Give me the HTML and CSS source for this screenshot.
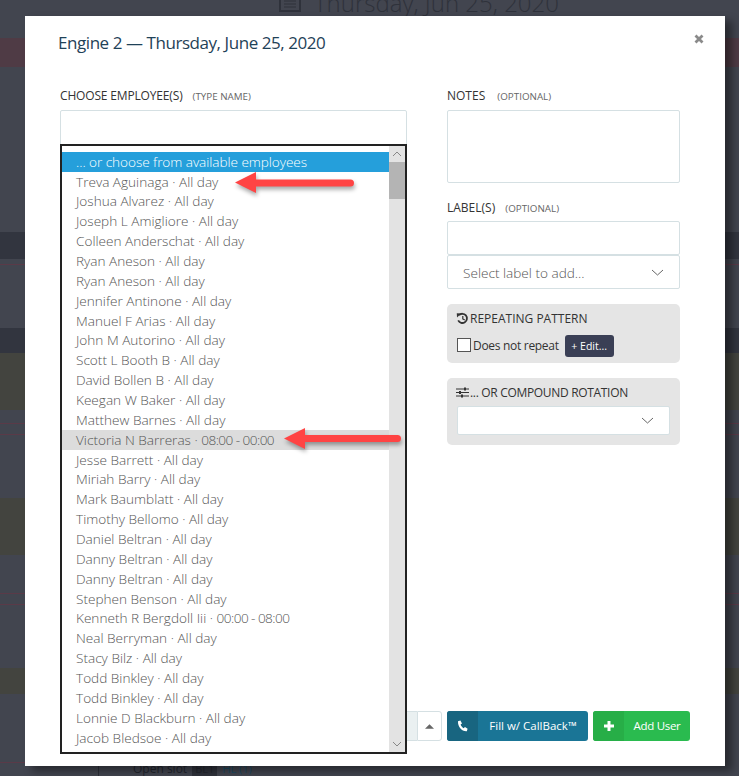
FILE: index.html
```html
<!DOCTYPE html>
<html lang="en">
<head>
  <meta charset="UTF-8" />
  <title>Engine 2 - Schedule</title>
  <link rel="stylesheet" href="styles.css">
</head>
<body>

  <!-- Schedule page behind the modal -->
  <div class="page">
    <div class="page-date">
      <svg class="cal-icon" width="22" height="20" viewBox="0 0 22 20"><rect x="1" y="1" width="20" height="18" fill="none" stroke="#2f323b" stroke-width="2"/><rect x="1" y="1" width="20" height="5" fill="#2f323b"/><path d="M5 9h12M5 12h12M5 15h12" stroke="#2f323b"/></svg>
      <span>Thursday, Jun 25, 2020</span>
    </div>
    <div class="band band-red"></div>
    <div class="band band-dark-1"></div>
    <div class="band band-line-1"></div>
    <div class="band band-dark-2"></div>
    <div class="band band-olive-1"></div>
    <div class="band band-line-2"></div>
    <div class="band band-line-3"></div>
    <div class="band band-olive-2"></div>
    <div class="band band-line-2 gap-far"></div>
    <div class="band band-line-3"></div>
    <div class="band band-olive-3"></div>
    <div class="band band-line-4"></div>
    <div class="page-foot">
      <span class="foot-box"></span>
      <span class="foot-slot">Open slot</span>
      <span class="foot-badge">BL1</span>
      <span class="foot-link">HL (1)</span>
    </div>
  </div>

  <!-- Modal -->
  <div class="modal">
    <div class="modal-head">
      <h1>Engine 2 — Thursday, June 25, 2020</h1>
      <svg class="close" width="10" height="10" viewBox="0 0 10 10"><path d="M1.5 1.5l7 7M8.5 1.5l-7 7" stroke="#8a8a8a" stroke-width="2.8"/></svg>
    </div>

    <div class="modal-body">
      <div class="col-left">
        <label class="field-label label-tight">CHOOSE EMPLOYEE(S) <small>(TYPE NAME)</small></label>
        <div class="input input-names"></div>
      </div>

      <div class="col-right">
        <label class="field-label">NOTES <small class="small-wide">(OPTIONAL)</small></label>
        <div class="input input-notes"></div>

        <label class="field-label label-gap">LABEL(S) <small>(OPTIONAL)</small></label>
        <div class="input input-label"></div>
        <div class="input select-label">
          <span>Select label to add...</span>
          <svg width="13" height="7" viewBox="0 0 13 7"><path d="M1 1l5.5 5L12 1" fill="none" stroke="#666"/></svg>
        </div>

        <div class="panel panel-repeat">
          <div class="panel-title">
            <svg width="13" height="13" viewBox="0 0 13 13"><path d="M3 3.2A4.6 4.6 0 1 1 2.2 8.4" fill="none" stroke="#333" stroke-width="1.8"/><path d="M0.8 1.2l4.4 0.2L1 5.4z" fill="#333"/><path d="M6.8 4v3l2 1" fill="none" stroke="#333" stroke-width="1.2"/></svg>
            <span>REPEATING PATTERN</span>
          </div>
          <div class="repeat-row">
            <span class="checkbox"></span>
            <span class="repeat-text">Does not repeat</span>
            <span class="edit-btn">+ Edit...</span>
          </div>
        </div>

        <div class="panel panel-rotation">
          <div class="panel-title">
            <svg width="13" height="11" viewBox="0 0 13 11"><path d="M0 2h13M0 5.5h13M0 9h13" stroke="#333"/><path d="M8 0.5h2v3H8zM3 4h2v3H3zM5 7.5h2v3H5z" fill="#333"/></svg>
            <span class="rotation-text">... OR COMPOUND ROTATION</span>
          </div>
          <div class="input select-rotation">
            <svg width="13" height="7" viewBox="0 0 13 7"><path d="M1 1l5.5 5L12 1" fill="none" stroke="#666"/></svg>
          </div>
        </div>
      </div>
    </div>

    <div class="modal-foot">
      <div class="spinner">
        <div class="spinner-field"></div>
        <div class="spinner-btn"><svg width="9" height="5" viewBox="0 0 10 5"><path d="M0 5L5 0l5 5z" fill="#666"/></svg></div>
      </div>
      <div class="btn btn-callback">
        <span class="btn-icon"><svg width="11" height="12" viewBox="0 0 11 12"><path d="M1 1.2L3.4 0.4 5 3.4 3.6 4.6C4.2 6.2 5.2 7.4 6.6 8.2L8 6.9 10.6 8.8 9.8 11.2C5 11.6 0.6 6.8 1 1.2z" fill="#fff"/></svg></span>
        <span class="btn-text">Fill w/ CallBack™</span>
      </div>
      <div class="btn btn-add">
        <span class="btn-icon"><svg width="10" height="10" viewBox="0 0 10 10"><path d="M5 0v10M0 5h10" stroke="#fff" stroke-width="3"/></svg></span>
        <span class="btn-text">Add User</span>
      </div>
    </div>

    <!-- Employee dropdown, open over the input -->
    <div class="listbox">
      <ul class="list">
        <li class="selected">... or choose from available employees</li>
        <li>Treva Aguinaga · All day</li>
        <li>Joshua Alvarez · All day</li>
        <li>Joseph L Amigliore · All day</li>
        <li>Colleen Anderschat · All day</li>
        <li>Ryan Aneson · All day</li>
        <li>Ryan Aneson · All day</li>
        <li>Jennifer Antinone · All day</li>
        <li>Manuel F Arias · All day</li>
        <li>John M Autorino · All day</li>
        <li>Scott L Booth B · All day</li>
        <li>David Bollen B · All day</li>
        <li>Keegan W Baker · All day</li>
        <li>Matthew Barnes · All day</li>
        <li class="hover">Victoria N Barreras · <span class="time">08:00 - 00:00</span></li>
        <li>Jesse Barrett · All day</li>
        <li>Miriah Barry · All day</li>
        <li>Mark Baumblatt · All day</li>
        <li>Timothy Bellomo · All day</li>
        <li>Daniel Beltran · All day</li>
        <li>Danny Beltran · All day</li>
        <li>Danny Beltran · All day</li>
        <li>Stephen Benson · All day</li>
        <li>Kenneth R Bergdoll Iii · <span class="time">00:00 - 08:00</span></li>
        <li>Neal Berryman · All day</li>
        <li>Stacy Bilz · All day</li>
        <li>Todd Binkley · All day</li>
        <li>Todd Binkley · All day</li>
        <li>Lonnie D Blackburn · All day</li>
        <li>Jacob Bledsoe · All day</li>
        <li>Joshua Blevins · All day</li>
      </ul>
      <div class="scrollbar">
        <div class="scroll-arrow"><svg width="10" height="6" viewBox="0 0 10 6"><path d="M1 5l4-4 4 4" fill="none" stroke="#888"/></svg></div>
        <div class="scroll-thumb"></div>
        <div class="scroll-track"></div>
        <div class="scroll-arrow"><svg width="10" height="6" viewBox="0 0 10 6"><path d="M1 1l4 4 4-4" fill="none" stroke="#888"/></svg></div>
      </div>
    </div>
  </div>

  <!-- Red annotation arrows -->
  <svg class="arrow arrow-one" width="126" height="26" viewBox="0 0 126 26"><path d="M2 11.5L23 1v7.5h94.5a3.5 3.5 0 0 1 0 7H23V22z" fill="#ff4444"/></svg>
  <svg class="arrow arrow-two" width="122" height="26" viewBox="0 0 122 26"><path d="M2 11.5L23 1v7h92.5a3.5 3.5 0 0 1 0 7H23V22z" fill="#ff4444"/></svg>

</body>
</html>
```

FILE: styles.css
```css
/* Global Styles */
* {
  box-sizing: border-box;
}
html, body {
  margin: 0;
  padding: 0;
  height: 776px;
  overflow: hidden;
}
body {
  position: relative;
  width: 739px;
  background: #42454f;
  font-family: 'Open Sans', sans-serif;
}

/* Page behind the modal */
.page {
  height: 776px;
  overflow: hidden;
}
.page-date {
  height: 38px;
  display: flex;
  align-items: flex-start;
  gap: 13px;
  padding: 0 0 0 279px;
  margin-top: -11px;
  color: #2f323b;
  font-size: 24px;
  font-weight: 300;
  line-height: 28px;
}
.cal-icon {
  margin-top: 3px;
}
.band { height: 1px; }
.band-red { height: 29px; margin-top: 11px; background: #4f3b45; }
.band-dark-1 { height: 27px; margin-top: 165px; background: #32353f; }
.band-line-1 { margin-top: 5px; background: #5a3a48; }
.band-dark-2 { height: 25px; margin-top: 63px; background: #32353f; }
.band-olive-1 { height: 57px; background: #43443f; }
.band-line-2 { margin-top: 13px; background: #5a3a48; }
.band-line-3 { margin-top: 10px; background: #5a3a48; }
.band-olive-2 { height: 57px; margin-top: 63px; background: #43443f; }
.gap-far { margin-top: 38px; }
.band-olive-3 { height: 26px; margin-top: 63px; background: #43443f; }
.band-line-4 { width: 99px; margin-top: 68px; background: #5a3a48; }
.page-foot {
  display: flex;
  align-items: center;
  gap: 5px;
  margin-top: -2px;
  height: 16px;
  font-size: 12px;
  line-height: 16px;
  color: #23262e;
}
.foot-box {
  width: 99px;
  height: 14px;
  margin-top: 1px;
  border-right: 1px solid #2c2f38;
  border-bottom: 1px solid #2c2f38;
}
.foot-slot {
  margin-left: 29px;
}
.foot-badge {
  padding: 0 3px;
  background: #2f323b;
  font-size: 11px;
}
.foot-link {
  color: #1c4a63;
  font-size: 11px;
}

/* Modal */
.modal {
  position: absolute;
  top: 16px;
  left: 25px;
  width: 700px;
  height: 750px;
  display: flex;
  flex-direction: column;
  background: #fff;
  box-shadow: 7px 5px 8px rgba(0, 0, 0, 0.4);
  padding: 0 35px;
}
.modal-head {
  height: 64px;
  display: flex;
  justify-content: space-between;
  align-items: flex-start;
  padding-top: 15px;
  margin: 0 -6px 0 -2px;
}
.modal-head h1 {
  margin: 0;
  font-size: 17px;
  font-weight: 400;
  letter-spacing: -0.44px;
  line-height: 24px;
  color: #1f4258;
}
.close {
  margin-top: 3px;
  margin-right: -8px;
}
.modal-body {
  flex: 1;
  display: flex;
  gap: 40px;
}
.col-left {
  width: 347px;
}
.col-right {
  width: 233px;
}
.field-label {
  display: block;
  height: 30px;
  padding-top: 8px;
  font-size: 12px;
  line-height: 16px;
  color: #333;
}
.field-label small {
  margin-left: 7px;
  font-size: 9.8px;
  letter-spacing: 0;
  color: #666;
}
.field-label .small-wide {
  margin-left: 9px;
}
.label-tight {
  letter-spacing: -0.16px;
}
.label-gap {
  height: 29px;
  margin-top: 9px;
  padding-top: 8px;
}
.input {
  background: #fff;
  border: 1px solid #d5e0e3;
  border-radius: 2px;
}
.input-names { height: 66px; }
.input-notes { height: 73px; }
.input-label { height: 34px; }
.select-label {
  height: 34px;
  display: flex;
  justify-content: space-between;
  align-items: center;
  padding: 0 15px;
  font-size: 13.6px;
  font-weight: 300;
  color: #555;
}

/* Grey panels */
.panel {
  background: #e5e5e5;
  border-radius: 5px;
  padding: 7px 10px 0;
  font-size: 12px;
  color: #333;
}
.panel-repeat {
  height: 59px;
  margin-top: 15px;
}
.panel-rotation {
  height: 67px;
  margin-top: 15px;
}
.panel-title {
  display: flex;
  align-items: center;
  gap: 1px;
  height: 14px;
  margin-left: -1px;
}
.rotation-text {
  letter-spacing: -0.32px;
}
.repeat-row {
  display: flex;
  align-items: center;
  gap: 2px;
  margin-top: 10px;
}
.checkbox {
  width: 14px;
  height: 14px;
  margin-top: -3px;
  background: #fff;
  border: 1px solid #555;
}
.repeat-text {
  margin-top: -2px;
  letter-spacing: -0.3px;
}
.edit-btn {
  margin-left: 4px;
  padding: 0 6px;
  height: 22px;
  width: 49px;
  text-align: center;
  line-height: 22px;
  background: #3a3f55;
  border-radius: 3px;
  color: #fff;
  font-size: 10.5px;
}
.select-rotation {
  height: 29px;
  margin-top: 7px;
  display: flex;
  justify-content: flex-end;
  align-items: center;
  padding-right: 15px;
}

/* Footer buttons */
.modal-foot {
  height: 55px;
  display: flex;
  justify-content: flex-end;
  gap: 5px;
}
.spinner {
  height: 30px;
  display: flex;
}
.spinner-field {
  width: 30px;
  background: #eaf0f1;
  border: 1px solid #d5e0e3;
  border-right: 0;
}
.spinner-btn {
  width: 25px;
  display: flex;
  align-items: center;
  justify-content: center;
  border: 1px solid #d5e0e3;
  border-radius: 0 3px 3px 0;
}
.btn {
  height: 30px;
  display: flex;
  border-radius: 3px;
  overflow: hidden;
  color: #fff;
  font-size: 11.5px;
  line-height: 30px;
}
.btn-icon {
  width: 31px;
  display: flex;
  align-items: center;
  justify-content: center;
}
.btn-text {
  flex: 1;
  text-align: center;
}
.btn-callback { width: 141px; background: #1a7596; }
.btn-callback .btn-icon { background: #186580; }
.btn-add { width: 97px; background: #2abb4f; letter-spacing: -0.3px; }
.btn-add .btn-icon { background: #27ae47; }

/* Dropdown list */
.listbox {
  position: absolute;
  top: 128px;
  left: 35px;
  width: 347px;
  height: 610px;
  display: flex;
  background: #fff;
  border: 2px solid #222;
  overflow: hidden;
}
.list {
  flex: 1;
  margin: 0;
  padding: 5.7px 0 0;
  list-style: none;
  font-size: 13.6px;
  font-weight: 300;
  line-height: 19.86px;
  color: #555;
  overflow: hidden;
}
.list li {
  padding-left: 14px;
  white-space: nowrap;
}
.list .selected {
  background: #259fdb;
  color: #fff;
  letter-spacing: -0.05px;
}
.list .hover {
  background: #dcdcdc;
}
.time {
  letter-spacing: -0.55px;
}
.scrollbar {
  width: 16px;
  display: flex;
  flex-direction: column;
  background: #e3e3e3;
}
.scroll-arrow {
  height: 16px;
  display: flex;
  align-items: center;
  justify-content: center;
}
.scroll-thumb {
  height: 37px;
  background: #b4b4b4;
}
.scroll-track {
  flex: 1;
}

/* Annotation arrows */
.arrow {
  position: absolute;
  filter: drop-shadow(1px 3px 2px rgba(0, 0, 0, 0.35));
}
.arrow-one { top: 171px; left: 233px; }
.arrow-two { top: 427px; left: 282px; }
```
